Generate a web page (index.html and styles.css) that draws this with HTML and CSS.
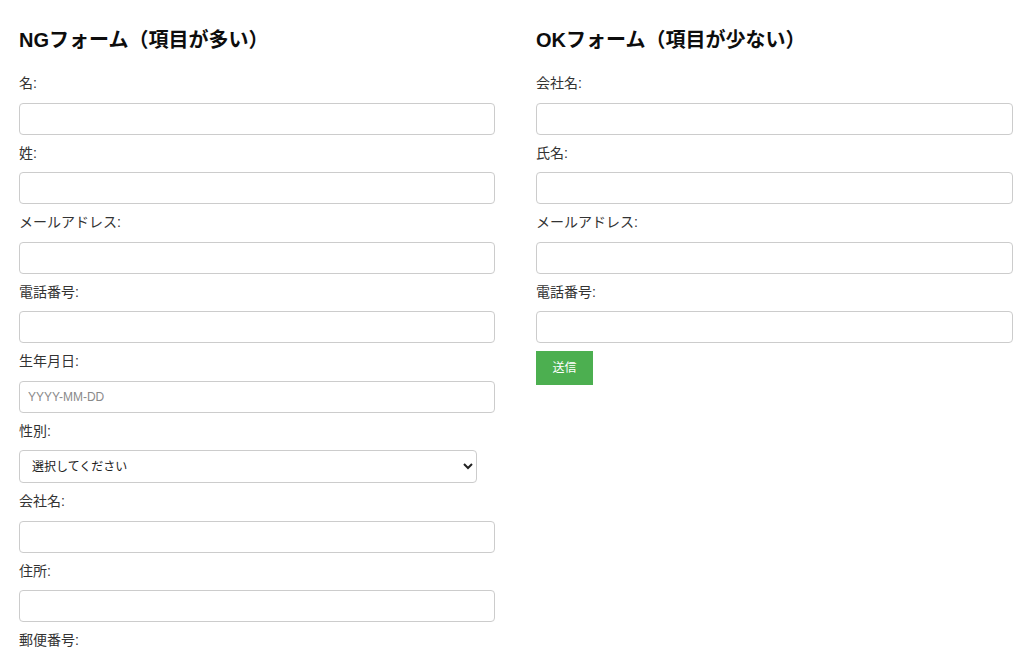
FILE: index.html
```html
<!DOCTYPE html>
<html lang="ja">
<head>
<meta charset="utf-8">
<title>フォーム比較</title>
<link rel="stylesheet" href="styles.css">
</head>
<body>
<div class="page">
  <section class="col">
    <h2 class="title">NGフォーム（項目が多い）</h2>
    <form class="form">
      <label class="lbl">名:</label>
      <input class="field" type="text">
      <label class="lbl">姓:</label>
      <input class="field" type="text">
      <label class="lbl">メールアドレス:</label>
      <input class="field" type="text">
      <label class="lbl">電話番号:</label>
      <input class="field" type="text">
      <label class="lbl">生年月日:</label>
      <input class="field" type="text" placeholder="YYYY-MM-DD">
      <label class="lbl">性別:</label>
      <select class="sel">
        <option>選択してください</option>
        <option>男性</option>
        <option>女性</option>
      </select>
      <label class="lbl">会社名:</label>
      <input class="field" type="text">
      <label class="lbl">住所:</label>
      <input class="field" type="text">
      <label class="lbl">郵便番号:</label>
      <input class="field" type="text">
      <button class="btn" type="button">送信</button>
    </form>
  </section>
  <section class="col">
    <h2 class="title">OKフォーム（項目が少ない）</h2>
    <form class="form">
      <label class="lbl">会社名:</label>
      <input class="field" type="text">
      <label class="lbl">氏名:</label>
      <input class="field" type="text">
      <label class="lbl">メールアドレス:</label>
      <input class="field" type="text">
      <label class="lbl">電話番号:</label>
      <input class="field" type="text">
      <button class="btn" type="button">送信</button>
    </form>
  </section>
</div>
</body>
</html>
```

FILE: styles.css
```css
html, body {
  margin: 0;
  padding: 0;
  background: #ffffff;
}
body {
  font-family: "Liberation Sans", "Noto Sans CJK JP", sans-serif;
  color: #333333;
}
.page {
  display: grid;
  grid-template-columns: 458px 459px;
  column-gap: 59px;
  padding: 26px 0 0 19px;
}
.col {
  min-width: 0;
}
.title {
  margin: 0 0 19px;
  font-size: 20px;
  line-height: 28px;
  font-weight: bold;
  color: #0d0d0d;
}
.form {
  display: flex;
  flex-direction: column;
  align-items: flex-start;
}
.lbl {
  display: block;
  font-size: 14px;
  line-height: 20.5px;
  margin-bottom: 9px;
  color: #333333;
}
.field {
  display: block;
  width: 100%;
  box-sizing: content-box;
  height: 14px;
  padding: 8px;
  margin: 0 0 8px;
  border: 1px solid #cccccc;
  border-radius: 4px;
  font-family: "Liberation Sans", "Noto Sans CJK JP", sans-serif;
  font-size: 12px;
  color: #333333;
  background: #ffffff;
  outline: none;
}
.field::placeholder {
  color: #8a8a8a;
}
.sel {
  display: block;
  width: 458px;
  height: 33px;
  padding: 0 8px;
  margin: 0 0 8px;
  border: 1px solid #cccccc;
  border-radius: 4px;
  font-family: "Liberation Sans", "Noto Sans CJK JP", sans-serif;
  font-size: 12px;
  color: #222222;
  background: #ffffff;
}
.btn {
  display: block;
  margin: 0;
  padding: 8px 16px;
  height: 34px;
  width: 57px;
  border: none;
  border-radius: 0;
  background: #4caf50;
  color: #ffffff;
  font-family: "Liberation Sans", "Noto Sans CJK JP", sans-serif;
  font-size: 12px;
  line-height: 18px;
  cursor: pointer;
}
```
